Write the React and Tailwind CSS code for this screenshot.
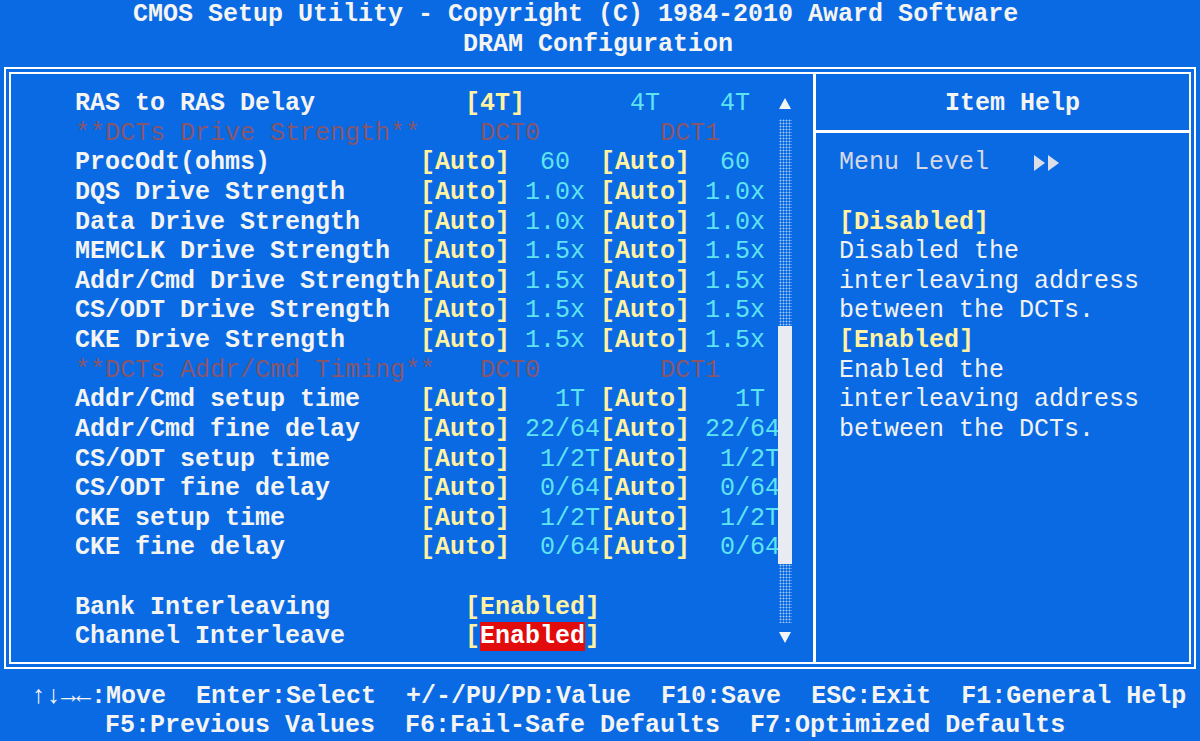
import React from "react";

// colour classes for the BIOS text grid
const W = "text-[#f4f4f2] font-bold";
const Y = "text-[#fff2a2] font-bold";
const C = "text-[#5ee4f0] font-normal";
const D = "text-[#86566c] font-normal";
const SEL = "bg-[#e20c0c] text-white font-bold";

const rows = [
  { label: "RAS to RAS Delay", lc: W, v: [["   [4T]", Y], ["       4T    4T", C]] },
  { label: "**DCTs Drive Strength**", lc: D, v: [["    DCT0        DCT1", D]] },
  { label: "ProcOdt(ohms)", lc: W, v: [["[Auto]", Y], ["  60  ", C], ["[Auto]", Y], ["  60", C]] },
  { label: "DQS Drive Strength", lc: W, v: [["[Auto]", Y], [" 1.0x ", C], ["[Auto]", Y], [" 1.0x", C]] },
  { label: "Data Drive Strength", lc: W, v: [["[Auto]", Y], [" 1.0x ", C], ["[Auto]", Y], [" 1.0x", C]] },
  { label: "MEMCLK Drive Strength", lc: W, v: [["[Auto]", Y], [" 1.5x ", C], ["[Auto]", Y], [" 1.5x", C]] },
  { label: "Addr/Cmd Drive Strength", lc: W, v: [["[Auto]", Y], [" 1.5x ", C], ["[Auto]", Y], [" 1.5x", C]] },
  { label: "CS/ODT Drive Strength", lc: W, v: [["[Auto]", Y], [" 1.5x ", C], ["[Auto]", Y], [" 1.5x", C]] },
  { label: "CKE Drive Strength", lc: W, v: [["[Auto]", Y], [" 1.5x ", C], ["[Auto]", Y], [" 1.5x", C]] },
  { label: "**DCTs Addr/Cmd Timing**", lc: D, v: [["    DCT0        DCT1", D]] },
  { label: "Addr/Cmd setup time", lc: W, v: [["[Auto]", Y], ["   1T ", C], ["[Auto]", Y], ["   1T", C]] },
  { label: "Addr/Cmd fine delay", lc: W, v: [["[Auto]", Y], [" 22/64", C], ["[Auto]", Y], [" 22/64", C]] },
  { label: "CS/ODT setup time", lc: W, v: [["[Auto]", Y], ["  1/2T", C], ["[Auto]", Y], ["  1/2T", C]] },
  { label: "CS/ODT fine delay", lc: W, v: [["[Auto]", Y], ["  0/64", C], ["[Auto]", Y], ["  0/64", C]] },
  { label: "CKE setup time", lc: W, v: [["[Auto]", Y], ["  1/2T", C], ["[Auto]", Y], ["  1/2T", C]] },
  { label: "CKE fine delay", lc: W, v: [["[Auto]", Y], ["  0/64", C], ["[Auto]", Y], ["  0/64", C]] },
  { label: "", lc: W, v: [] },
  { label: "Bank Interleaving", lc: W, v: [["   [Enabled]", Y]] },
  { label: "Channel Interleave", lc: W, v: [["   [", Y], ["Enabled", SEL], ["]", Y]] },
];

const help = [
  ["[Disabled]", Y],
  ["Disabled the", "text-[#f2f2f2]"],
  ["interleaving address", "text-[#f2f2f2]"],
  ["between the DCTs.", "text-[#f2f2f2]"],
  ["[Enabled]", Y],
  ["Enabled the", "text-[#f2f2f2]"],
  ["interleaving address", "text-[#f2f2f2]"],
  ["between the DCTs.", "text-[#f2f2f2]"],
];

const Row = ({ label, lc, v }) => (
  <div className="h-[29.64px] whitespace-pre">
    <span className={`inline-block w-[345px] ${lc}`}>{label}</span>
    {v.map(([t, c], i) => (
      <span key={i} className={c}>{t}</span>
    ))}
  </div>
);

const ScrollBar = () => (
  <div className="w-[14px] flex flex-col items-center">
    <div className="h-[29.64px] flex items-center justify-center">
      <svg width="12" height="11" viewBox="0 0 12 11"><polygon points="6,0 12,11 0,11" fill="#f4f4f4" /></svg>
    </div>
    <div className="h-[207px] w-[13px] bg-[radial-gradient(circle,rgba(255,255,255,0.65)_0.7px,transparent_1.2px)] bg-[length:3px_3px]" />
    <div className="h-[238px] w-[14px] bg-[#e9ebf2]" />
    <div className="h-[59px] w-[13px] bg-[radial-gradient(circle,rgba(255,255,255,0.65)_0.7px,transparent_1.2px)] bg-[length:3px_3px]" />
    <div className="h-[29.64px] flex items-center justify-center">
      <svg width="12" height="11" viewBox="0 0 12 11"><polygon points="0,0 12,0 6,11" fill="#f4f4f4" /></svg>
    </div>
  </div>
);

export default function App() {
  return (
    <div className="w-[1200px] h-[741px] overflow-hidden bg-[#0a6ae4] text-[25px] leading-[29.64px] font-['Liberation_Mono','DejaVu_Sans_Mono',monospace] text-[#f4f4f2]">
      {/* title */}
      <div className="h-[67px] font-bold whitespace-pre">
        <div className="pl-[133px]">CMOS Setup Utility - Copyright (C) 1984-2010 Award Software</div>
        <div className="pl-[463px]">DRAM Configuration</div>
      </div>

      {/* double frame */}
      <div className="ml-[4px] w-[1192px] h-[602px] border-2 border-white p-[3px]">
        <div className="h-full border-2 border-white flex">
          <div className="w-[805px] border-r-[3px] border-white flex pt-[15px]">
            <div className="flex-1 pl-[64px] min-w-0">
              {rows.map((r, i) => (
                <Row key={i} {...r} />
              ))}
            </div>
            <div className="mr-[21px]">
              <ScrollBar />
            </div>
          </div>

          <div className="flex-1 pt-[15px]">
            <div className="h-[29.64px] pl-[129px] font-bold whitespace-pre">Item Help</div>
            <div className="h-[29.64px] pt-[11px]">
              <div className="h-[3px] bg-white" />
            </div>
            <div className="pl-[23px] whitespace-pre">
              <div className="h-[29.64px] flex items-center text-[#d6d9e4]">
                <span>Menu Level</span>
                <svg className="ml-[45px]" width="28" height="16" viewBox="0 0 28 16">
                  <polygon points="0,0 11,8 0,16" fill="#dcdfe8" />
                  <polygon points="14,0 25,8 14,16" fill="#dcdfe8" />
                </svg>
              </div>
              <div className="h-[29.64px]" />
              {help.map(([t, c], i) => (
                <div key={i} className={`h-[29.64px] ${c}`}>{t}</div>
              ))}
            </div>
          </div>
        </div>
      </div>

      {/* key legend */}
      <div className="mt-[12.7px] font-bold whitespace-pre">
        <div className="pl-[31px]">↑↓→←:Move  Enter:Select  +/-/PU/PD:Value  F10:Save  ESC:Exit  F1:General Help</div>
        <div className="pl-[105px]">F5:Previous Values  F6:Fail-Safe Defaults  F7:Optimized Defaults</div>
      </div>
    </div>
  );
}
